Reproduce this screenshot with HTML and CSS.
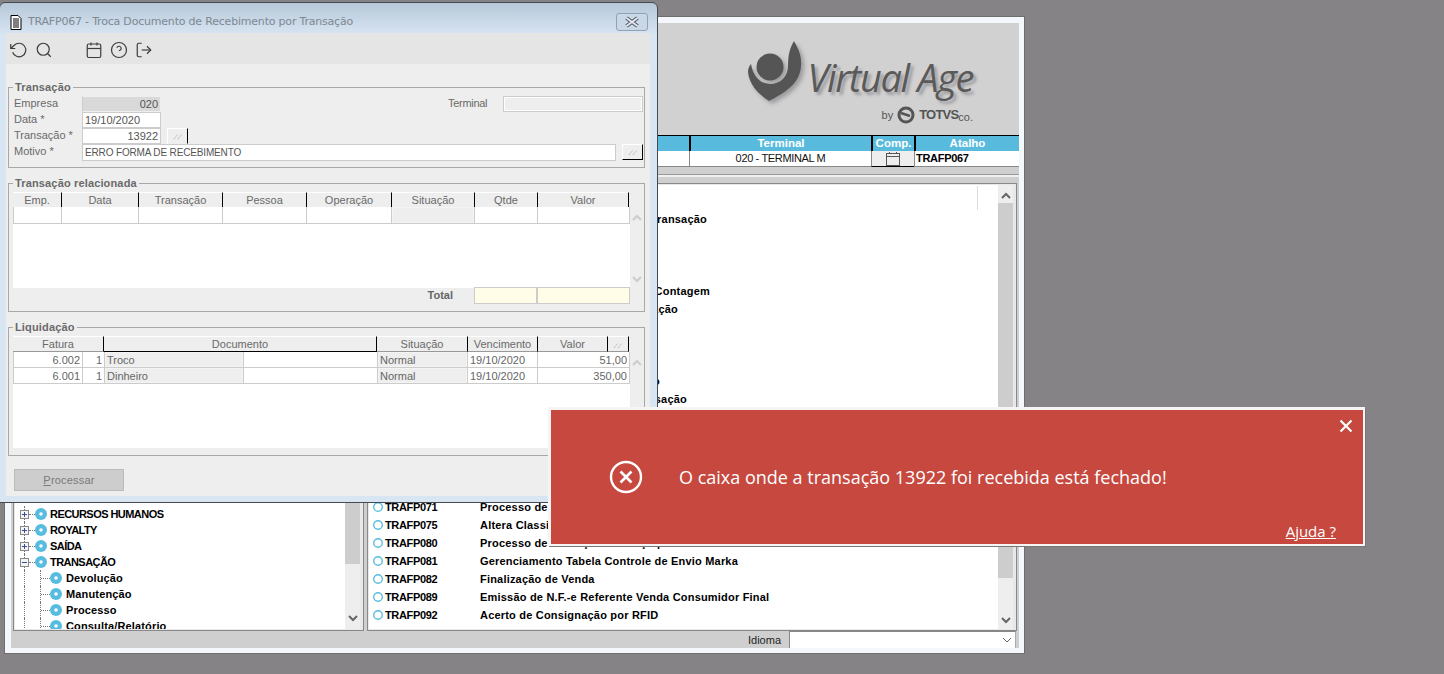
FILE: index.html
```html
<!DOCTYPE html>
<html lang="pt-BR">
<head>
<meta charset="utf-8">
<title>TRAFP067</title>
<link rel="stylesheet" href="styles.css">
</head>
<body>
<svg class="defs" width="0" height="0" aria-hidden="true">
  <symbol id="dots" viewBox="0 0 12 10"><path d="M2 8 L6 3 M6 8 L10 3" stroke="#999" stroke-width="1" stroke-dasharray="1 1.2" fill="none"/></symbol>
  <symbol id="disc" viewBox="0 0 14 14"><circle cx="7" cy="7" r="6" fill="#56bde0"/><circle cx="7" cy="7" r="1.8" fill="#fff"/></symbol>
  <symbol id="ring" viewBox="0 0 14 14"><circle cx="7" cy="7" r="5" fill="#fff" stroke="#56bde0" stroke-width="1.6"/></symbol>
  <symbol id="plus" viewBox="0 0 9 9"><rect x=".5" y=".5" width="8" height="8" fill="#f4f4f4" stroke="#888"/><path d="M2 4.5h5M4.5 2v5" stroke="#35509a"/></symbol>
  <symbol id="minus" viewBox="0 0 9 9"><rect x=".5" y=".5" width="8" height="8" fill="#f4f4f4" stroke="#888"/><path d="M2 4.5h5" stroke="#35509a"/></symbol>
  <symbol id="up" viewBox="0 0 10 7"><path d="M1 6 L5 2 L9 6" fill="none" stroke="currentColor" stroke-width="2"/></symbol>
  <symbol id="down" viewBox="0 0 10 7"><path d="M1 1 L5 5 L9 1" fill="none" stroke="currentColor" stroke-width="2"/></symbol>
</svg>

<section class="main-window">
  <div class="main-body">
    <header class="banner">
      <svg class="logo-mark" viewBox="0 0 58 66" width="58" height="66"><path fill="#555" d="M48 3 C52 10 56 18 55 28 C54 46 38 55 23 63 C12 56 3 46 2 34 C2 31 3 28 5 26 C7 38 14 46 24 46 C35 46 42 38 42 28 C42 16 44 10 48 3Z"/><circle cx="24" cy="29" r="13.5" fill="#555"/></svg>
      <div class="logo-words">
        <div class="logo-name">Virtual Age</div>
        <div class="logo-by"><span class="by">by</span><svg class="totvs-mark" viewBox="0 0 18 18" width="18" height="18"><circle cx="9" cy="9" r="7" fill="none" stroke="#555" stroke-width="3"/><path d="M4 7 L13 10" stroke="#555" stroke-width="2.4"/></svg><span class="totvs">TOTVS</span><span class="co">co.</span></div>
      </div>
    </header>

    <div class="status-grid">
      <div class="sg-head"></div><div class="sg-head">Terminal</div><div class="sg-head">Comp.</div><div class="sg-head">Atalho</div>
      <div class="sg-cell"></div>
      <div class="sg-cell sg-term">020 - TERMINAL M</div>
      <div class="sg-cell sg-comp"><svg viewBox="0 0 16 14" width="16" height="14"><rect x="1.5" y="1.5" width="13" height="12" fill="none" stroke="#555"/><path d="M1 4.5h14M4.5 0v2M11.5 0v2" stroke="#555"/></svg></div>
      <div class="sg-cell sg-shortcut">TRAFP067</div>
    </div>
    <div class="splitter"></div>

    <div class="panels">
      <div class="panel panel-tree">
        <ul class="tree">
          <li class="node caps"><svg class="exp"><use href="#plus"/></svg><svg class="dot"><use href="#disc"/></svg>RECURSOS HUMANOS</li>
          <li class="node caps"><svg class="exp"><use href="#plus"/></svg><svg class="dot"><use href="#disc"/></svg>ROYALTY</li>
          <li class="node caps"><svg class="exp"><use href="#plus"/></svg><svg class="dot"><use href="#disc"/></svg>SAÍDA</li>
          <li class="node caps"><svg class="exp"><use href="#minus"/></svg><svg class="dot"><use href="#disc"/></svg>TRANSAÇÃO</li>
          <li class="node child"><svg class="dot"><use href="#disc"/></svg>Devolução</li>
          <li class="node child"><svg class="dot"><use href="#disc"/></svg>Manutenção</li>
          <li class="node child"><svg class="dot"><use href="#disc"/></svg>Processo</li>
          <li class="node child"><svg class="dot"><use href="#disc"/></svg>Consulta/Relatório</li>
        </ul>
        <div class="scroll scroll-tree">
          <div class="thumb"></div>
          <svg class="chev"><use href="#down"/></svg>
        </div>
      </div>

      <div class="panel panel-list">
        <div class="list-wrap">
          <div class="col-line"></div>
          <ul class="list">
            <li></li>
            <li><i></i><b></b><span class="frag frag-a">Transação</span></li>
            <li></li>
            <li></li>
            <li></li>
            <li><i></i><b></b><span class="frag frag-b">Contagem</span></li>
            <li><i></i><b></b><span class="frag frag-c">Operação</span></li>
            <li></li>
            <li></li>
            <li></li>
            <li><i></i><b></b><span class="frag frag-d">o</span></li>
            <li><i></i><b></b><span class="frag frag-e">Transação</span></li>
            <li></li>
            <li></li>
            <li></li>
            <li></li>
            <li></li>
            <li><svg class="ring"><use href="#ring"/></svg><b>TRAFP071</b><span>Processo de</span></li>
            <li><svg class="ring"><use href="#ring"/></svg><b>TRAFP075</b><span>Altera Classi</span></li>
            <li><svg class="ring"><use href="#ring"/></svg><b>TRAFP080</b><span>Processo de Alteração de Preço por Item</span></li>
            <li><svg class="ring"><use href="#ring"/></svg><b>TRAFP081</b><span>Gerenciamento Tabela Controle de Envio Marka</span></li>
            <li><svg class="ring"><use href="#ring"/></svg><b>TRAFP082</b><span>Finalização de Venda</span></li>
            <li><svg class="ring"><use href="#ring"/></svg><b>TRAFP089</b><span>Emissão de N.F.-e Referente Venda Consumidor Final</span></li>
            <li><svg class="ring"><use href="#ring"/></svg><b>TRAFP092</b><span>Acerto de Consignação por RFID</span></li>
          </ul>
        </div>
        <div class="scroll scroll-list">
          <svg class="chev chev-up"><use href="#up"/></svg>
          <div class="thumb"></div>
          <svg class="chev"><use href="#down"/></svg>
        </div>
      </div>
    </div>

    <footer class="lang-row">
      <span class="lang-label">Idioma</span>
      <div class="lang-select"><svg class="chev-thin" viewBox="0 0 10 6" width="10" height="6"><path d="M1 1 L5 5 L9 1" fill="none" stroke="#666"/></svg></div>
    </footer>
  </div>
</section>

<section class="dialog">
  <div class="dialog-title">
    <svg class="doc-icon" viewBox="0 0 12 16" width="12" height="16"><path d="M1 1.5h7l3 3v11H1z" fill="#fff" stroke="#000"/><path d="M3 5h6M3 7h6M3 9h6M3 11h6M3 13h6" stroke="#000"/></svg>
    <span class="title-text">TRAFP067 - Troca Documento de Recebimento por Transação</span>
    <button class="close-btn" type="button" aria-label="Fechar"><svg viewBox="0 0 16 12" width="16" height="12"><path d="M2.5 2 L13.5 10 M13.5 2 L2.5 10" stroke="#50586a" stroke-width="4"/><path d="M2.5 2 L13.5 10 M13.5 2 L2.5 10" stroke="#e6ebf2" stroke-width="1.8"/></svg></button>
  </div>
  <div class="client">
    <div class="toolbar">
      <svg class="tool" viewBox="0 0 24 24"><polyline points="1 4 1 10 7 10"/><path d="M3.51 15a9 9 0 1 0 2.13-9.36L1 10"/></svg>
      <svg class="tool" viewBox="0 0 24 24"><circle cx="11" cy="11" r="8"/><line x1="21" y1="21" x2="16.65" y2="16.65"/></svg>
      <svg class="tool tool-gap" viewBox="0 0 24 24"><rect x="3" y="4" width="18" height="18" rx="2"/><line x1="16" y1="2" x2="16" y2="6"/><line x1="8" y1="2" x2="8" y2="6"/><line x1="3" y1="10" x2="21" y2="10"/></svg>
      <svg class="tool" viewBox="0 0 24 24"><circle cx="12" cy="12" r="10"/><path d="M9.09 9a3 3 0 0 1 5.83 1c0 2-3 3-3 3"/><line x1="12" y1="17" x2="12.01" y2="17"/></svg>
      <svg class="tool" viewBox="0 0 24 24"><path d="M9 21H5a2 2 0 0 1-2-2V5a2 2 0 0 1 2-2h4"/><polyline points="16 17 21 12 16 7"/><line x1="21" y1="12" x2="9" y2="12"/></svg>
    </div>

    <fieldset class="group group-trans">
      <legend>Transação</legend>
      <div class="form">
        <label>Empresa</label><div class="input input-ro right">020</div><div class="fill"></div><label class="terminal-label">Terminal</label><div class="input input-flat"></div>
      </div>
      <div class="form">
        <label>Data *</label><div class="input">19/10/2020</div>
      </div>
      <div class="form">
        <label>Transação *</label><div class="input right">13922</div><button class="pick pick-trans" type="button"><svg><use href="#dots"/></svg></button>
      </div>
      <div class="form">
        <label>Motivo *</label><div class="input input-wide">ERRO FORMA DE RECEBIMENTO</div><button class="pick pick-motivo" type="button"><svg><use href="#dots"/></svg></button>
      </div>
    </fieldset>

    <fieldset class="group group-rel">
      <legend>Transação relacionada</legend>
      <div class="grid-head cols-rel">
        <div>Emp.</div><div>Data</div><div>Transação</div><div>Pessoa</div><div>Operação</div><div class="active">Situação</div><div>Qtde</div><div>Valor</div>
      </div>
      <div class="grid-wrap wrap-rel">
        <div class="grid-body">
          <div class="grid-row cols-rel-b">
            <div></div><div></div><div></div><div></div><div></div><div class="shade"></div><div></div><div></div>
          </div>
        </div>
        <div class="grid-scroll">
          <svg class="chev"><use href="#up"/></svg>
          <svg class="chev"><use href="#down"/></svg>
        </div>
      </div>
      <div class="total-row">
        <strong class="total-label">Total</strong><div class="total-cell cell-a"></div><div class="total-cell cell-b"></div>
      </div>
    </fieldset>

    <fieldset class="group group-liq">
      <legend>Liquidação</legend>
      <div class="grid-head cols-liq">
        <div>Fatura</div><div class="active">Documento</div><div>Situação</div><div>Vencimento</div><div>Valor</div><div><svg class="head-dots"><use href="#dots"/></svg></div>
      </div>
      <div class="grid-wrap wrap-liq">
        <div class="grid-body">
          <div class="grid-row cols-liq-b">
            <div class="right">6.002</div><div class="right">1</div><div class="shade">Troco</div><div></div><div class="shade">Normal</div><div>19/10/2020</div><div class="right">51,00</div>
          </div>
          <div class="grid-row cols-liq-b">
            <div class="right">6.001</div><div class="right">1</div><div class="shade">Dinheiro</div><div></div><div class="shade">Normal</div><div>19/10/2020</div><div class="right">350,00</div>
          </div>
        </div>
        <div class="grid-scroll">
          <svg class="chev"><use href="#up"/></svg>
        </div>
      </div>
    </fieldset>

    <button class="process" type="button"><u>P</u>rocessar</button>
  </div>
</section>

<aside class="toast">
  <div class="toast-top">
    <svg class="toast-close" viewBox="0 0 14 14" width="14" height="14"><path d="M1.5 1.5 L12.5 12.5 M12.5 1.5 L1.5 12.5" stroke="#fff" stroke-width="2.2"/></svg>
  </div>
  <div class="toast-msg">
    <svg class="toast-icon" viewBox="0 0 34 34" width="34" height="34"><circle cx="17" cy="17" r="15" fill="none" stroke="#fff" stroke-width="2.4"/><path d="M11.5 11.5 L22.5 22.5 M22.5 11.5 L11.5 22.5" stroke="#fff" stroke-width="2.6"/></svg>
    <p>O caixa onde a transação 13922 foi recebida está fechado!</p>
  </div>
  <a class="toast-help" href="#">Ajuda ?</a>
</aside>
</body>
</html>
```

FILE: styles.css
```css
* { box-sizing: border-box; }
html, body { margin: 0; height: 100%; }
body {
  position: relative;
  width: 1444px;
  height: 674px;
  overflow: hidden;
  background: #858385;
  font-family: "Liberation Sans", Arial, sans-serif;
  font-size: 11px;
}
ul { list-style: none; margin: 0; padding: 0; }
.defs { position: absolute; }

/* main window */
.main-window {
  position: absolute;
  left: 4px;
  top: 16px;
  width: 1021px;
  height: 638px;
  border: 1px solid #6e6e6e;
  background: #f4f8fd;
  padding: 6px 5px 5px 6px;
}
.main-body {
  height: 100%;
  background: #cfcfcf;
  display: flex;
  flex-direction: column;
}
.banner {
  height: 112px;
  flex: none;
  display: flex;
  align-items: flex-start;
  padding: 15px 0 0 735px;
  gap: 3px;
  background: #d1d1d1;
}
.logo-mark { filter: drop-shadow(3px 3px 2px rgba(90,90,100,.45)); }
.logo-words { display: flex; flex-direction: column; align-items: flex-end; width: 166px; }
.logo-name {
  margin-top: 18px;
  font: italic 400 38px/42px "Open Sans", sans-serif;
  letter-spacing: -1.4px;
  color: #5a5a5a;
  white-space: nowrap;
  text-shadow: 3px 3px 3px rgba(90,90,100,.45);
}
.logo-by { display: flex; align-items: center; gap: 4px; margin-top: 8px; color: #555; }
.by { font: 11px "Liberation Sans", sans-serif; }
.totvs { font: 700 13px/18px "Liberation Sans", sans-serif; letter-spacing: -.8px; }
.co { font: 11px "Liberation Sans", sans-serif; margin-left: -4px; padding-top: 3px; }

.status-grid {
  flex: none;
  display: grid;
  grid-template-columns: 678px 182px 43px 105px;
  grid-template-rows: 16px 16px;
  background: #fff;
}
.sg-head {
  background: #58bbde;
  color: #fff;
  font-weight: 700;
  font-size: 11.5px;
  line-height: 15px;
  text-align: center;
  border-top: 1px solid #000;
  border-left: 2px solid #000;
}
.sg-head:first-child { border-left: 0; }
.sg-head:last-child { border-right: 1px solid #000; }
.sg-cell {
  background: #fff;
  border-bottom: 1px solid #888;
  border-left: 1px solid #888;
  line-height: 15px;
  text-align: center;
  color: #111;
}
.sg-term { letter-spacing: -.35px; }
.sg-comp {
  background: #eee;
  border-bottom: 1px solid #000;
  display: flex;
  justify-content: center;
  align-items: flex-start;
  padding-top: 1px;
}
.sg-shortcut { text-align: left; padding-left: 1px; font-weight: 700; color: #000; letter-spacing: -.3px; }
.splitter { flex: none; height: 16px; }
.splitter::after {
  content: "";
  display: block;
  height: 2px;
  margin-top: 7px;
  background: #f0f0f0;
  border-top: 1px solid #999;
}

.panels {
  flex: none;
  height: 448px;
  display: flex;
  gap: 3px;
  padding-left: 2px;
}
.panel {
  height: 100%;
  border: 1px solid #888;
  padding: 1px;
  background: #e8e8e8;
  display: flex;
  overflow: hidden;
}
.panel-tree { width: 351px; }
.panel-list { width: 650px; }

.tree {
  flex: 1;
  background: #fff;
  padding: 321px 0 0 4px;
  overflow: hidden;
}
.node {
  position: relative;
  height: 16px;
  display: flex;
  align-items: center;
  font-weight: 700;
  color: #000;
  font-size: 11px;
  letter-spacing: .15px;
  white-space: nowrap;
}
.caps { letter-spacing: -.55px; }
.node::before {
  content: "";
  position: absolute;
  left: 5px;
  top: 0;
  height: 16px;
  border-left: 1px dotted #777;
}
.node.caps::after {
  content: "";
  position: absolute;
  left: 10px;
  top: 8px;
  width: 6px;
  border-top: 1px dotted #777;
}
.child::after {
  content: "";
  position: absolute;
  left: 21px;
  top: 0;
  width: 9px;
  height: 16px;
  border-left: 1px dotted #777;
  background: linear-gradient(to right, #777 50%, transparent 50%) 0 8px / 2px 1px repeat-x;
}
.node .exp { position: relative; z-index: 1; width: 9px; height: 9px; flex: none; margin: 0 5px 0 1px; }
.node .dot { position: relative; z-index: 1; width: 14px; height: 14px; flex: none; margin-right: 3px; }
.caps .dot { margin-right: 2px; }
.child { padding-left: 30px; }

.scroll {
  flex: none;
  width: 15px;
  margin-right: 2px;
  background: #eee;
  display: flex;
  flex-direction: column;
  align-items: center;
  color: #666;
}
.scroll .thumb { width: 100%; background: #cdcdcd; }
.scroll-tree .thumb { height: 379px; }
.scroll-tree .chev { margin-top: 51px; }
.scroll-list .thumb { height: 375px; margin-top: 4px; }
.scroll-list .chev { margin-top: 39px; }
.scroll-list .chev-up { margin-top: 7px; }
.chev { width: 10px; height: 7px; flex: none; }

.list-wrap { flex: 1; background: #fff; padding-top: 7px; position: relative; overflow: hidden; }
.col-line { position: absolute; right: 20px; top: 1px; width: 1px; height: 24px; background: #ddd; }
.list li {
  height: 18px;
  display: grid;
  grid-template-columns: 12px 96px 1fr;
  align-items: center;
  padding-left: 3px;
  white-space: nowrap;
  font-weight: 700;
  color: #000;
  font-size: 11px;
  letter-spacing: .2px;
}
.list .ring { width: 12px; height: 12px; }
.list b { font-weight: 700; letter-spacing: -.35px; padding-left: 1px; }
.frag { display: block; text-align: right; }
.frag-a { width: 227px; }
.frag-b { width: 230px; }
.frag-c { width: 198px; }
.frag-d { width: 180px; }
.frag-e { width: 207px; }

.lang-row {
  flex: 1;
  display: flex;
  justify-content: flex-end;
  align-items: center;
  color: #222;
  padding-right: 3px;
}
.lang-label { width: 41px; }
.lang-select {
  width: 227px;
  height: 100%;
  background: #fff;
  border-top: 1px solid #888;
  border-left: 1px solid #888;
  border-right: 1px solid #aaa;
  display: flex;
  align-items: center;
  justify-content: flex-end;
  padding-right: 3px;
}

/* dialog */
.dialog {
  position: absolute;
  left: -1px;
  top: 2px;
  width: 659px;
  height: 501px;
  border: 1px solid #46494e;
  border-radius: 6px 6px 0 0;
  background: linear-gradient(#b6c8d8 0, #d8e5f3 32px, #d8e5f3 100%);
}
.dialog-title {
  height: 30px;
  display: flex;
  align-items: center;
  padding: 7px 9px 0 10px;
  color: #7d8893;
}
.doc-icon { flex: none; margin-right: 6px; }
.title-text { flex: 1; font: 11px "DejaVu Sans", sans-serif; letter-spacing: -.2px; white-space: nowrap; }
.close-btn {
  width: 32px;
  height: 18px;
  padding: 0;
  background: #cad8e6;
  border: 1px solid #8fa3b8;
  border-radius: 3px;
  display: flex;
  align-items: center;
  justify-content: center;
}
.client {
  margin-left: 6px;
  width: 644px;
  height: 463px;
  background: #eeeeee;
  color: #666;
}
.toolbar {
  height: 31px;
  background: #e5e5e5;
  display: flex;
  align-items: center;
  padding: 2px 0 0 4px;
  gap: 7px;
}
.tool {
  width: 18px;
  height: 18px;
  fill: none;
  stroke: #3d3d3d;
  stroke-width: 1.6;
  flex: none;
}
.tool-gap { margin-left: 25px; }

.group {
  margin: 0 0 8px 2px;
  width: 637px;
  padding: 2px 0 0 4px;
  border: 1px solid #a8a8a8;
  min-width: 0;
  display: block;
}
.group legend {
  margin-left: 0;
  padding: 0 2px;
  font-weight: 700;
  font-size: 11px;
  line-height: 14px;
  color: #6a6a6a;
  letter-spacing: .15px;
}
.group-trans { margin-top: 16px; height: 88px; }
.group-rel { height: 136px; }
.group-liq { height: 136px; margin-bottom: 0; }

.form {
  height: 16px;
  display: flex;
  align-items: stretch;
  line-height: 15px;
  padding: 0 1px;
  color: #6a6a6a;
}
.form label { width: 68px; flex: none; }
.form:last-child { height: 17px; }
.input {
  width: 79px;
  flex: none;
  background: #fff;
  border: 1px solid #ccc;
  padding: 0 2px;
  color: #555;
  white-space: nowrap;
}
.input-ro { background: #d9d9d9; border-color: #eee #eee #eee #ccc; }
.input-flat { width: 140px; background: #eee; border: 1px solid #ccc; box-shadow: inset 0 0 0 1px #fff; }
.input-wide { width: 534px; font-size: 10px; letter-spacing: -.15px; }
.right { text-align: right; }
.fill { flex: 1; }
.form .terminal-label { width: 55px; letter-spacing: -.3px; }
.pick {
  padding: 0;
  height: 16px;
  width: 21px;
  background: #eee;
  border: 1px solid #fff;
  border-right: 1px solid #000;
  border-bottom: 1px solid #000;
  flex: none;
  display: flex;
  align-items: center;
  justify-content: center;
}
.pick svg { width: 12px; height: 10px; }
.pick-trans { margin-left: 6px; border-bottom-color: #eee; }
.pick-motivo { margin-left: 6px; }

.grid-head {
  display: grid;
  height: 15px;
  width: 616px;
  text-align: center;
  line-height: 13px;
  color: #6a6a6a;
}
.grid-head > div {
  background: #eee;
  border-top: 1px solid #fff;
  border-bottom: 1px solid #999;
  border-right: 1px solid #000;
  padding-top: 1px;
  display: flex;
  justify-content: center;
  align-items: center;
}
.grid-head > div.active { border-bottom: 1px solid #000; }
.cols-rel { grid-template-columns: 49px 77px 84px 84px 85px 83px 63px 91px; }
.cols-liq { grid-template-columns: 91px 273px 91px 70px 70px 21px; }
.cols-rel-b { grid-template-columns: 49px 77px 84px 84px 85px 83px 63px 92px; }
.cols-liq-b { grid-template-columns: 70px 22px 139px 134px 90px 70px 92px; }
.head-dots { width: 12px; height: 10px; }

.grid-wrap { display: flex; width: 632px; }
.wrap-rel { height: 81px; }
.wrap-liq { height: 96px; margin-top: 1px; }
.grid-body { width: 617px; background: #fff; }
.grid-row {
  display: grid;
  height: 16px;
  line-height: 16px;
  color: #666;
}
.wrap-rel .grid-row { height: 17px; }
.grid-row > div {
  border-right: 1px solid #ccc;
  border-bottom: 1px solid #ccc;
  padding: 0 2px;
  white-space: nowrap;
  overflow: hidden;
}
.grid-row > div:first-child { border-left: 1px solid #ccc; }
.grid-row > .shade { background: #eee; box-shadow: inset 0 0 0 1px #f4f4f4; }
.grid-scroll {
  width: 15px;
  display: flex;
  flex-direction: column;
  justify-content: space-between;
  align-items: flex-start;
  padding: 7px 0 5px 2px;
  color: #ccc;
}
.total-row {
  display: flex;
  align-items: stretch;
  height: 17px;
  margin-top: -1px;
  line-height: 17px;
}
.total-label { width: 441px; padding-right: 21px; text-align: right; color: #666; margin-left: 20px; flex: none; }
.total-cell { background: #fffde8; border: 1px solid #ccc; flex: none; }
.cell-a { width: 63px; }
.cell-b { width: 93px; border-left: 1px solid #ccc; }

.process {
  display: block;
  margin: 13px 0 0 8px;
  width: 110px;
  height: 22px;
  padding: 0;
  background: #cdcdcd;
  border: 1px solid #bbb;
  color: #7a7a7a;
  font: 11px "Liberation Sans", sans-serif;
  letter-spacing: .2px;
}

/* toast */
.toast {
  position: absolute;
  left: 548px;
  top: 407px;
  width: 817px;
  height: 139px;
  background: #c6483f;
  border: solid #f7f4f4;
  border-width: 3px 2px 2px 3px;
  box-shadow: 1px 1px 0 #777;
  color: #fff;
  display: flex;
  flex-direction: column;
  padding: 9px 20px 0 0;
}
.toast-top { display: flex; justify-content: flex-end; height: 14px; }
.toast-close { margin-right: -10px; }
.toast-msg {
  display: flex;
  align-items: center;
  height: 62px;
  margin-top: 13px;
  padding-left: 58px;
}
.toast-icon { flex: none; margin-right: 36px; }
.toast-msg p {
  margin: 0;
  font: 18px/24px "Open Sans", sans-serif;
  white-space: nowrap;
}
.toast-help {
  align-self: flex-end;
  margin: 14px 7px 0 0;
  color: #fff;
  font: 15px/18px "Open Sans", sans-serif;
  text-decoration: underline;
}
```
